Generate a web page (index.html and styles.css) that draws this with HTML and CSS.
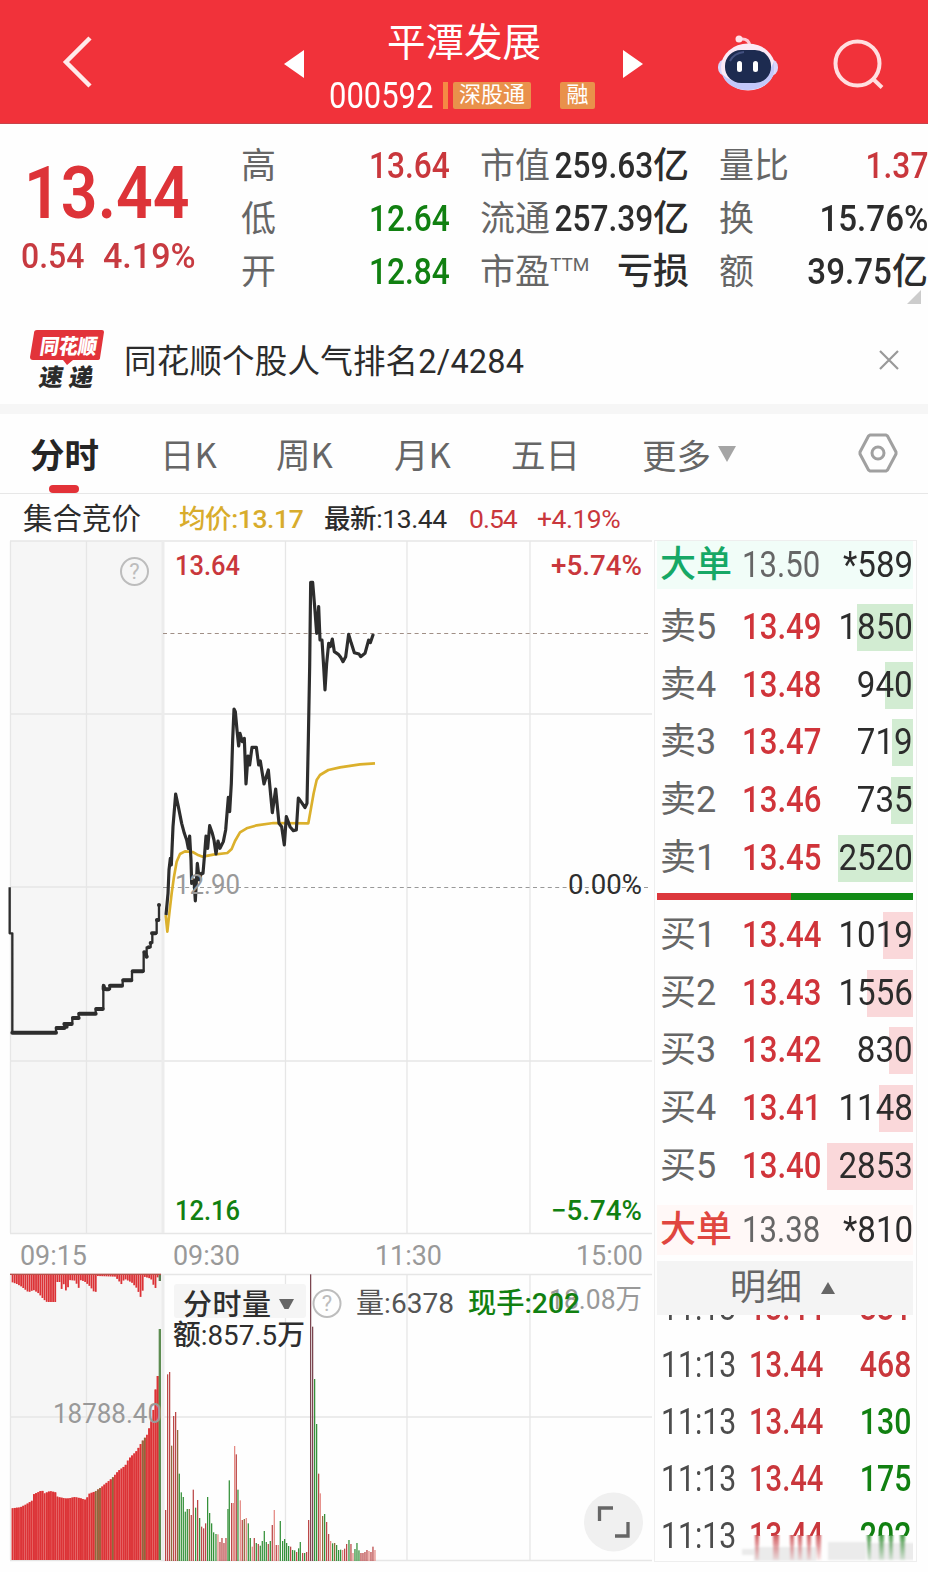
FILE: index.html
```html
<!DOCTYPE html>
<html lang="zh-CN">
<head>
<meta charset="utf-8">
<title>平潭发展 000592</title>
<link rel="stylesheet" href="styles.css">
</head>
<body>
<header class="top">
  <svg class="back" width="40" height="60" viewBox="0 0 40 60"><path d="M31 5 7 29 31 53" fill="none" stroke="#ffeaea" stroke-width="4.5"/></svg>
  <svg class="prev" width="20" height="30" viewBox="0 0 20 30"><path d="M20 1V29L0 15z" fill="#fff"/></svg>
  <div class="stock">
    <h1 class="name">平潭发展</h1>
    <div class="code-row"><span class="code"><span class="n n-left">000592</span></span><i class="tick"></i><span class="tag">深股通</span><span class="tag tag-rong">融</span></div>
  </div>
  <svg class="next" width="20" height="30" viewBox="0 0 20 30"><path d="M0 1V29L20 15z" fill="#fff"/></svg>
  <svg class="robot" width="60" height="58" viewBox="0 0 60 58">
    <path d="M22 5q9-1 10 7" fill="none" stroke="#ffc9d6" stroke-width="3"/><circle cx="21" cy="5" r="3.500" fill="#ffe3ea"/>
    <rect x="0" y="25" width="60" height="17" rx="8" fill="#d9d5fb"/>
    <ellipse cx="30" cy="33" rx="27" ry="23.500" fill="#fbeaf6"/>
    <path d="M56 27c4 20-12 30-29 29-12-1-20-7-23-16 12 12 42 15 52-13z" fill="#c3c8fa"/>
    <rect x="7" y="16" width="46" height="33" rx="16" fill="#1d2b50"/>
    <path d="M12 27q4-8 14-9" fill="none" stroke="#435180" stroke-width="2"/>
    <rect x="19" y="27" width="5" height="11" rx="2.500" fill="#fff"/><rect x="35" y="27" width="5" height="11" rx="2.500" fill="#fff"/>
  </svg>
  <svg class="search" width="52" height="52" viewBox="0 0 52 52"><g fill="none" stroke="#ffdfe0" stroke-width="4"><circle cx="24.500" cy="25.500" r="22"/><path d="M39 40l10 9.500"/></g></svg>
</header>

<section class="quote">
  <div class="price-box">
    <div class="price"><span class="n n-left">13.44</span></div>
    <div class="change"><span class="chg-a"><span class="n n-left">0.54</span></span><span class="chg-b"><span class="n n-left">4.19%</span></span></div>
  </div>
  <dl class="stats">
    <dt>高</dt><dd class="up"><span class="n">13.64</span></dd>
    <dt>低</dt><dd class="down"><span class="n">12.64</span></dd>
    <dt>开</dt><dd class="down"><span class="n">12.84</span></dd>
  </dl>
  <dl class="stats">
    <dt>市值</dt><dd><span class="n">259.63</span>亿</dd>
    <dt>流通</dt><dd><span class="n">257.39</span>亿</dd>
    <dt>市盈<sup>TTM</sup></dt><dd>亏损</dd>
  </dl>
  <dl class="stats last">
    <dt>量比</dt><dd class="up"><span class="n">1.37</span></dd>
    <dt>换</dt><dd><span class="n wide">15.76%</span></dd>
    <dt>额</dt><dd><span class="n wide">39.75</span>亿</dd>
  </dl>
  <i class="corner"></i>
</section>

<section class="banner">
  <svg class="logo" width="76" height="62" viewBox="0 0 76 62">
    <path d="M7 1H72q2 0 2 2L70 29q0 2-3 2H43l-6 5-4-5H3q-3 0-3-3L4 4q0-3 3-3z" fill="#e2333a"/>
    <g class="logo-text" transform="skewX(-9)"><text x="13" y="24.500" font-size="21" fill="#fff" textLength="57" lengthAdjust="spacingAndGlyphs">同花顺</text><text x="17" y="57" font-size="24" fill="#2b2b2b" textLength="54">速递</text></g>
  </svg>
  <p class="banner-text">同花顺个股人气排名2/4284</p>
  <svg class="close" width="20" height="20" viewBox="0 0 20 20"><path d="M1 1 19 19M19 1 1 19" stroke="#999" stroke-width="2.200"/></svg>
</section>

<nav class="tabs">
  <span class="tab active">分时</span><span class="tab">日K</span><span class="tab">周K</span><span class="tab">月K</span><span class="tab">五日</span>
  <span class="tab more">更多<svg width="18" height="16" viewBox="0 0 18 16"><path d="M0 0H18L9 16z" fill="#a5a5a5"/></svg></span>
  <svg class="gear" width="40" height="40" viewBox="0 0 40 40"><g fill="none" stroke="#a0a0a0" stroke-width="3"><path d="M12 2H28L29.500 3 38 19V21L29.500 37 28 38H12L10.500 37 2 21V19L10.500 3z" stroke-linejoin="round"/><circle cx="20" cy="20" r="6"/></g></svg>
</nav>

<div class="legend">
  <span class="auction">集合竞价</span>
  <span class="avg">均价:<span class="num">13.17</span></span>
  <span class="latest">最新:<span class="num">13.44</span></span>
  <span class="up l-chg">0.54</span>
  <span class="up l-pct">+4.19%</span>
</div>

<main class="main">
<svg class="chart" width="654" height="1032" viewBox="0 540 654 1032">
  <rect x="10" y="541" width="152" height="692" fill="#f6f6f6"/>
  <rect x="10" y="1274" width="152" height="286" fill="#f6f6f6"/>
  <g stroke="#e6e6e6" stroke-width="1.3" fill="none">
    <path d="M10 541H652M10 714H652M10 887H162M10 1061H652M10 1233.500H652M10.500 541V1233M86.500 541V1233M285.500 541V1233M407 541V1233M530 541V1233"/>
    <path d="M10 1274.500H652M10 1417H652M10 1560.500H652M10.500 1274V1560M86.500 1274V1560M285.500 1274V1560M407 1274V1560M530 1274V1560"/>
    <path d="M163 541V1233M163 1274V1560" stroke="#ececec" stroke-width="3"/>
  </g>
  <g stroke-width="1.200" fill="none" stroke-dasharray="4 3.400"><path d="M163 633.500H650" stroke="#a08f86"/><path d="M163 887.500H650" stroke="#999"/></g>
  <g id="volume" transform="translate(0 1260) scale(.33333)"></g>
  <g transform="translate(0 540) scale(.33333)" fill="none" stroke-linejoin="round">
    <path stroke="#dbb02c" stroke-width="8" d="M497 1125 502 1175 508 1120 515 1060 522 1010 530 965 540 942 555 934 578 936 592 944 608 950 640 944 682 939 695 927 705 903 720 877 740 865 770 856 820 849 925 850 933 805 941 760 950 720 960 705 985 690 1020 682 1080 673 1125 670"/>
    <path stroke="#2d2d2d" stroke-width="9.500" d="M498 1125 504 1060 507 990 511 955 514 975 519 860 527 762 535 800 545 850 553 880 560 900 565 925 569 888 573 960 575 1030 582 1020 586 1083 592 970 598 1020 604 1000 609 1000 614 940 618 888 623 925 629 857 637 880 642 900 648 942 654 903 660 925 670 905 677 870 685 772 689 815 694 730 698 600 702 507 706 515 711 570 716 618 720 580 727 605 733 595 738 732 744 648 749 675 756 622 769 622 776 675 781 663 792 732 805 690 817 818 827 747 837 850 845 860 853 915 859 830 870 860 880 872 889 870 895 774 903 785 915 803 921 790 925 600 929 380 932 127 938 127 944 200 950 280 956 200 960 300 966 300 971 380 975 450 980 370 986 310 991 320 997 297 1003 335 1015 343 1022 352 1029 365 1037 350 1046 283 1054 310 1063 338 1077 342 1082 350 1095 340 1106 300 1111 308 1120 282"/>
    <g transform="translate(0 960)" stroke="#2d2d2d">
      <path stroke-width="7" d="M29 82V220H37V518H168V503H193V490H217V473H236V460H287V446H310V375L318 388H330V376H368V360H396V334H431V275L440 290V262H452V248H457V220H470V180H477V133"/>
      <path stroke-width="12" stroke-linecap="round" d="M37 518H168M170 504H193M193 492H215M200 500V500M219 474H236M238 461H287M289 447H308M311 378V388M318 388H325M330 377H366M370 361H394M398 334H428M434 277L440 290M446 262V262M452 249V249M456 220H466M471 180H475M477 135V135"/>
    </g>
  </g>
  <g class="marks">
    <text class="t-up" x="175" y="575" textLength="65" lengthAdjust="spacingAndGlyphs">13.64</text>
    <text class="t-up" x="551" y="575" textLength="91" lengthAdjust="spacingAndGlyphs">+5.74%</text>
    <text class="t-gray" x="175" y="894" textLength="65" lengthAdjust="spacingAndGlyphs">12.90</text>
    <text class="t-dark" x="568" y="894" textLength="74" lengthAdjust="spacingAndGlyphs">0.00%</text>
    <text class="t-down" x="175" y="1220" textLength="65" lengthAdjust="spacingAndGlyphs">12.16</text>
    <text class="t-down" x="551" y="1220" textLength="91" lengthAdjust="spacingAndGlyphs">−5.74%</text>
    <text class="t-gray" x="20" y="1265" textLength="67" lengthAdjust="spacingAndGlyphs">09:15</text>
    <text class="t-gray" x="173" y="1265" textLength="67" lengthAdjust="spacingAndGlyphs">09:30</text>
    <text class="t-gray" x="375" y="1265" textLength="67" lengthAdjust="spacingAndGlyphs">11:30</text>
    <text class="t-gray" x="576" y="1265" textLength="67" lengthAdjust="spacingAndGlyphs">15:00</text>
    <text class="t-gray" x="53" y="1423" textLength="109" lengthAdjust="spacingAndGlyphs">18788.40</text>
    <rect x="174" y="1284" width="132" height="34" rx="3" fill="#f5f5f5"/>
    <text class="t-dark t-btn" x="183" y="1315" textLength="88">分时量</text>
    <path d="M279 1299H294L288.500 1309H284.500z" fill="#666"/>
    <text class="t-dark" x="173" y="1345" textLength="132" lengthAdjust="spacingAndGlyphs">额:857.5万</text>
    <text class="t-mid" x="356" y="1313" textLength="98" lengthAdjust="spacingAndGlyphs">量:6378</text>
    <text class="t-gray" x="549" y="1309" textLength="93" lengthAdjust="spacingAndGlyphs">18.08万</text>
    <text class="t-down" x="468" y="1313" textLength="112" lengthAdjust="spacingAndGlyphs">现手:202</text>
  </g>
  <g class="help" fill="none" stroke="#bdbdbd" stroke-width="2">
    <circle cx="134.500" cy="571.500" r="13.500"/><circle cx="327" cy="1303.500" r="13.500"/>
    <text x="134.500" y="579">?</text><text x="327" y="1311">?</text>
  </g>
  <circle cx="613.500" cy="1522" r="29.500" fill="#f0f0f0"/>
  <path d="M599.500 1521V1508H613M628 1522V1536H615" fill="none" stroke="#666" stroke-width="3.300"/>
</svg>

<aside class="book">
  <div class="row big big-sell"><span class="lab">大单</span><span class="pr"><span class="n n-left">13.50</span></span><span class="vol"><span class="n">*589</span></span></div>
  <div class="row"><span class="lab">卖5</span><span class="pr"><span class="n n-left">13.49</span></span><span class="vol"><i class="depth sell" style="width:56px"></i><span class="n">1850</span></span></div>
  <div class="row"><span class="lab">卖4</span><span class="pr"><span class="n n-left">13.48</span></span><span class="vol"><i class="depth sell" style="width:28px"></i><span class="n">940</span></span></div>
  <div class="row"><span class="lab">卖3</span><span class="pr"><span class="n n-left">13.47</span></span><span class="vol"><i class="depth sell" style="width:21px"></i><span class="n">719</span></span></div>
  <div class="row"><span class="lab">卖2</span><span class="pr"><span class="n n-left">13.46</span></span><span class="vol"><i class="depth sell" style="width:22px"></i><span class="n">735</span></span></div>
  <div class="row"><span class="lab">卖1</span><span class="pr"><span class="n n-left">13.45</span></span><span class="vol"><i class="depth sell" style="width:75px"></i><span class="n">2520</span></span></div>
  <div class="ratio"><i class="r-buy" style="width:134px"></i><i class="r-sell"></i></div>
  <div class="row"><span class="lab">买1</span><span class="pr"><span class="n n-left">13.44</span></span><span class="vol"><i class="depth buy" style="width:30px"></i><span class="n">1019</span></span></div>
  <div class="row"><span class="lab">买2</span><span class="pr"><span class="n n-left">13.43</span></span><span class="vol"><i class="depth buy" style="width:46px"></i><span class="n">1556</span></span></div>
  <div class="row"><span class="lab">买3</span><span class="pr"><span class="n n-left">13.42</span></span><span class="vol"><i class="depth buy" style="width:24px"></i><span class="n">830</span></span></div>
  <div class="row"><span class="lab">买4</span><span class="pr"><span class="n n-left">13.41</span></span><span class="vol"><i class="depth buy" style="width:34px"></i><span class="n">1148</span></span></div>
  <div class="row"><span class="lab">买5</span><span class="pr"><span class="n n-left">13.40</span></span><span class="vol"><i class="depth buy" style="width:86px"></i><span class="n">2853</span></span></div>
  <div class="row big big-buy"><span class="lab">大单</span><span class="pr"><span class="n n-left">13.38</span></span><span class="vol"><span class="n">*810</span></span></div>
  <div class="detail-head">明细<svg width="14" height="12" viewBox="0 0 14 12"><path d="M0 12H14L7 0z" fill="#666"/></svg></div>
  <div class="trades">
    <div class="trade"><span class="tm"><span class="n n-left">11:13</span></span><span class="tp"><span class="n n-left">13.44</span></span><span class="tv up"><span class="n">331</span></span></div>
    <div class="trade"><span class="tm"><span class="n n-left">11:13</span></span><span class="tp"><span class="n n-left">13.44</span></span><span class="tv up"><span class="n">468</span></span></div>
    <div class="trade"><span class="tm"><span class="n n-left">11:13</span></span><span class="tp"><span class="n n-left">13.44</span></span><span class="tv down"><span class="n">130</span></span></div>
    <div class="trade"><span class="tm"><span class="n n-left">11:13</span></span><span class="tp"><span class="n n-left">13.44</span></span><span class="tv down"><span class="n">175</span></span></div>
    <div class="trade"><span class="tm"><span class="n n-left">11:13</span></span><span class="tp"><span class="n n-left">13.44</span></span><span class="tv down"><span class="n">202</span></span></div>
    <svg class="smear" width="176" height="27" viewBox="740 1535 176 27">
      <defs>
        <linearGradient id="red" x2="0" y2="1"><stop offset="0" stop-color="#cf5358"/><stop offset="1" stop-color="#cf5358" stop-opacity=".12"/></linearGradient>
        <linearGradient id="green" x2="0" y2="1"><stop offset="0" stop-color="#3f963f"/><stop offset="1" stop-color="#3f963f" stop-opacity=".12"/></linearGradient>
        <filter id="soft" x="-10%" y="-10%" width="120%" height="120%"><feGaussianBlur stdDeviation="1.200 1"/></filter>
      </defs>
      <rect x="740" y="1536" width="176" height="26" fill="#fefefe"/>
      <g filter="url(#soft)">
        <path d="M742 1549h12v6h-12zM754 1547h62v14h-62zM828 1542h38v18h-38zM868 1543h47v17h-47z" fill="#e6e6e6" opacity=".8"/>
        <path d="M755 1533h4v27h-4zM773 1533h6v27h-6zM790 1533h4v27h-4zM798 1533h4v27h-4zM807 1533h4v27h-4zM816 1533h5v27h-5z" fill="url(#red)"/>
        <path d="M867 1533h4v27h-4zM879 1533h5v27h-5zM889 1533h4v27h-4zM900 1533h5v27h-5z" fill="url(#green)"/>
      </g>
    </svg>
  </div>
</aside>
</main>
<script src="chart.js"></script>
</body>
</html>
```
FILE: styles.css
```css
* { box-sizing: border-box; margin: 0; padding: 0; }
body { width: 928px; height: 1572px; overflow: hidden; background: #fefefe; color: #2c2c2c; font-family: Roboto, "Noto Sans CJK SC", sans-serif; }
svg { display: block; flex: none; }
.n { display: inline-block; transform: scaleX(.865); transform-origin: right center; }
.n-left { transform-origin: left center; }
.up { color: #c9373c; }
.down { color: #118011; }

.top { display: flex; height: 124px; background: #f1323a; border-bottom: 1px solid #c8434a; color: #fff; }
.back { margin: 33px 0 0 59px; }
.prev { margin: 49px 0 0 185px; }
.stock { width: 296px; margin-left: 25px; }
.name { margin-left: 58px; padding-top: 18px; font-size: 38.500px; line-height: 50px; font-weight: 400; }
.code-row { display: flex; align-items: center; height: 54px; }
.code { width: 114px; font-size: 36px; line-height: 54px; padding-top: 1px; }
.code .n { transform: scaleX(.86); }
.tick { width: 5px; height: 27px; margin-right: 5px; background: #f58a44; }
.tag { width: 78px; height: 27px; border-radius: 2px; background: #e9914b; text-align: center; font-size: 22px; line-height: 26px; }
.tag-rong { width: 35px; margin-left: 29px; }
.next { margin: 49px 0 0 -2px; }
.robot { margin: 34px 0 0 75px; }
.search { margin: 38px 0 0 55px; }

.quote { position: relative; display: flex; height: 186px; }
.price-box { width: 241px; padding: 30px 0 0 21px; color: #dd3338; }
.price { padding-left: 3px; height: 79px; font-size: 72px; line-height: 80px; font-weight: 600; }
.price .n { transform: scaleX(.895); }
.change { display: flex; height: 46px; font-size: 35.500px; line-height: 46px; color: #c73a40; font-weight: 500; }
.chg-a { width: 82px; }
.chg-a .n { transform: scaleX(.9); }
.chg-b .n { transform: scaleX(.96); }
.stats { display: grid; grid-template-columns: 66px 143px; grid-auto-rows: 53px; width: 209px; margin-right: 30px; padding-top: 15.500px; font-size: 36px; line-height: 53px; white-space: nowrap; }
.stats.last { margin-right: 0; }
.stats dt { color: #666; font-size: 35px; font-weight: 400; }
.stats dd { text-align: right; font-weight: 500; font-size: 36px; }
.stats .n { transform: scaleX(.88); margin-left: -20px; }
.stats .wide { transform: scaleX(.92); }
.stats sup { font-size: 19px; line-height: 1; vertical-align: 13px; }
.corner { position: absolute; right: 7px; bottom: 6px; border-left: 14px solid transparent; border-bottom: 14px solid #ccc; }

.banner { display: flex; align-items: center; height: 104px; border-bottom: 10px solid #f6f6f6; padding: 6px 29px 0 30px; }
.logo-text { font-family: "Noto Sans CJK SC", sans-serif; font-weight: 900; }
.banner-text { margin-left: 18px; padding-top: 4px; font-size: 32.500px; line-height: 44px; letter-spacing: .2px; }
.close { margin-left: auto; }

.tabs { display: flex; position: relative; height: 80px; border-bottom: 1px solid #e7e7e7; padding-left: 30px; font: 400 34.500px/78px "Noto Sans CJK SC", sans-serif; color: #666; }
.tab { width: 118px; white-space: nowrap; }
.tab:first-child { width: 130px; }
.tab:nth-child(2) { width: 116px; }
.tab:nth-child(4) { width: 117px; }
.tab:nth-child(5) { width: 131px; }
.active { position: relative; color: #252525; font-weight: 700; }
.active::after { content: ""; position: absolute; left: 19px; bottom: 0; width: 30px; height: 8px; border-radius: 4px; background: #e33238; }
.more { display: flex; align-items: center; gap: 7px; }
.gear { margin: 19px 0 0 98px; }

.legend { display: flex; align-items: center; height: 46px; padding: 4px 0 0 23px; font-size: 26.500px; line-height: 40px; white-space: nowrap; }
.auction { width: 156px; font-size: 29.500px; }
.avg { width: 145px; color: #d8ac2c; font-weight: 500; letter-spacing: -.4px; }
.latest { width: 145px; font-weight: 450; letter-spacing: -.4px; }
.l-chg { width: 68px; font-weight: 450; letter-spacing: -1px; }
.l-pct { font-weight: 450; letter-spacing: -.5px; }

.main { display: flex; height: 1032px; }
.marks { font-size: 28px; font-weight: 500; }
.t-up { fill: #c9373c; } .t-down { fill: #118011; } .t-gray { fill: #999; font-weight: 400; } .t-dark { fill: #2e2e2e; font-weight: 450; } .t-mid { fill: #555; font-weight: 400; }
.t-btn { font-size: 29px; }
.help text { font-size: 22px; text-anchor: middle; fill: #bdbdbd; stroke: none; }

.book { width: 263px; height: 1022px; border: 1px solid #eee; padding: 0 3px 0 2px; font-size: 36px; overflow: hidden; }
.row { display: flex; align-items: center; height: 57.600px; padding-left: 3px; line-height: 57px; white-space: nowrap; }
.lab { flex: none; width: 82px; color: #666; font-weight: 400; }
.pr { flex: none; width: 88px; color: #d0343a; font-weight: 500; }
.vol { position: relative; flex: 1; min-width: 0; text-align: right; font-weight: 450; }
.vol .n { position: relative; margin-left: -10px; transform: scaleX(.92); }
.depth { position: absolute; right: 0; top: 5px; height: 47px; }
.sell { background: #d2ecd2; }
.buy { background: #fad8da; }
.big { height: 48px; line-height: 46px; }
.big .pr { color: #666; font-weight: 450; }
.big-sell { margin-bottom: 10px; background: #f1fdf8; }
.big-sell .lab { color: #16a866; font-weight: 500; }
.big-buy { margin: 10px 0 6px; height: 50px; background: #fff8f7; }
.big-buy .lab { color: #e0463f; font-weight: 500; }
.ratio { display: flex; height: 20px; padding: 6.500px 0; }
.r-buy { background: #dc373c; }
.r-sell { flex: 1; background: #128b16; }
.detail-head { display: flex; justify-content: center; align-items: center; gap: 19px; height: 54px; padding: 0 5px 0 0; background: #f4f4f4; color: #666; line-height: 54px; }
.trades { position: relative; height: 248px; padding-left: 4px; overflow: hidden; }
.trade { display: flex; height: 57px; line-height: 58px; }
.trade:first-child { margin-top: -36px; }
.tm { flex: none; width: 88px; color: #4c4c4c; }
.tm .n { transform: scaleX(.84); }
.tp { flex: none; width: 80px; color: #c9373c; font-weight: 500; }
.tp .n { transform: scaleX(.81); }
.tv { flex: 1; text-align: right; font-weight: 500; margin-right: 2px; }
.tv .n { transform: scaleX(.84); }
.smear { position: absolute; left: 83px; bottom: 1px; }
```
FILE: chart.js
```js
const layer = document.getElementById('volume');
const RED = '#dc3236', PINK = '#e58a84', GREEN = '#35913a', OLIVE = '#8d6a3c';

function bar(x, y, w, h, fill) {
  const r = document.createElementNS('http://www.w3.org/2000/svg', 'rect');
  r.setAttribute('x', x);
  r.setAttribute('y', y);
  r.setAttribute('width', w);
  r.setAttribute('height', h);
  r.setAttribute('fill', fill);
  layer.appendChild(r);
}

function at(points, x) {
  for (let i = 1; i < points.length; i++) {
    const [x0, y0] = points[i - 1], [x1, y1] = points[i];
    if (x <= x1) return y0 + (y1 - y0) * (x - x0) / (x1 - x0);
  }
  return points[points.length - 1][1];
}

// Call auction: matched volume rises from the base, unmatched hangs from the top.
const matched = [[34,745],[60,742],[80,732],[95,722],[100,703],[125,691],[133,700],[150,693],[165,697],[172,711],[200,716],[225,711],[245,716],[258,720],[265,702],[285,694],[305,680],[335,655],[355,632],[375,617],[385,597],[410,572],[425,545],[440,525],[450,495],[458,465],[464,400],[473,343]];
const unmatched = [[34,66],[50,72],[64,80],[85,97],[100,90],[115,100],[130,118],[140,126],[166,126],[171,66],[181,66],[187,105],[192,60],[200,110],[206,60],[225,62],[235,85],[242,60],[255,66],[270,80],[286,102],[291,48],[345,50],[365,74],[372,56],[395,68],[410,85],[425,120],[431,50],[452,56],[465,88],[472,52]];
let k = 0;
for (let x = 35; x < 474; x += 6.4, k++) {
  const olive = (x > 284 && x < 300) || (x > 332 && x < 340) || (x > 422 && x < 436);
  const y = at(matched, x + 2);
  bar(x, y, 6.4, 900 - y, k % 3 ? '#e14a4a' : '#f09a94');
  bar(x, y, 5, 900 - y, olive ? OLIVE : RED);
  bar(x, 43, 5.4, at(unmatched, x + 2) - 43, RED);
}
bar(476, 207, 7, 693, '#5c8c50');
bar(476, 43, 7, 20, '#5c7c50');
bar(30, 41, 453, 4, '#b8504a');

// Continuous session: x, top, colour.
const session = '497 750 r;503 343 r;509 336 r;515 557 o;521 468 r;527 456 r;533 510 o;538 641 g;544 697 g;550 711 g;556 755 g;562 747 g;568 747 o;574 765 r;580 689 r;587 743 g;593 720 r;599 774 g;605 800 r;611 805 r;617 790 r;623 711 g;629 759 g;635 790 g;641 817 g;648 822 g;654 823 p;660 846 r;666 834 r;672 849 r;678 834 r;684 747 g;688 661 g;695 729 r;700 729 p;704 558 p;709 583 r;714 689 g;721 721 p;727 780 r;733 777 o;739 774 p;745 790 g;751 834 g;757 860 p;763 834 r;769 849 g;775 852 r;781 857 g;787 843 g;793 813 g;799 846 g;805 852 r;811 843 g;817 795 r;823 750 p;829 855 r;835 855 p;841 783 g;848 843 g;854 837 g;860 849 g;866 858 g;872 860 r;878 870 g;884 871 g;890 876 r;896 865 g;901 846 g;908 879 r;914 879 g;920 876 r;926 780 r;932 43 d;938 200 d;944 357 g;950 492 g;956 641 r;961 700 p;968 768 o;974 762 g;980 786 r;986 822 r;992 843 p;998 850 g;1004 849 o;1010 855 g;1016 870 g;1022 869 g;1028 870 p;1034 866 r;1040 852 r;1047 840 g;1053 852 r;1059 879 p;1065 867 g;1071 849 g;1077 871 g;1083 879 r;1089 879 r;1095 876 r;1101 870 r;1107 873 p;1113 876 r;1119 860 r;1125 870 p';
const palette = { r: '#bb4848', p: PINK, g: GREEN, o: OLIVE, d: '#7b4650' };
session.split(';').forEach(item => {
  const [x, top, c] = item.split(' ');
  bar(x - 2, +top, 3.8, 903 - top, palette[c]);
});
```
